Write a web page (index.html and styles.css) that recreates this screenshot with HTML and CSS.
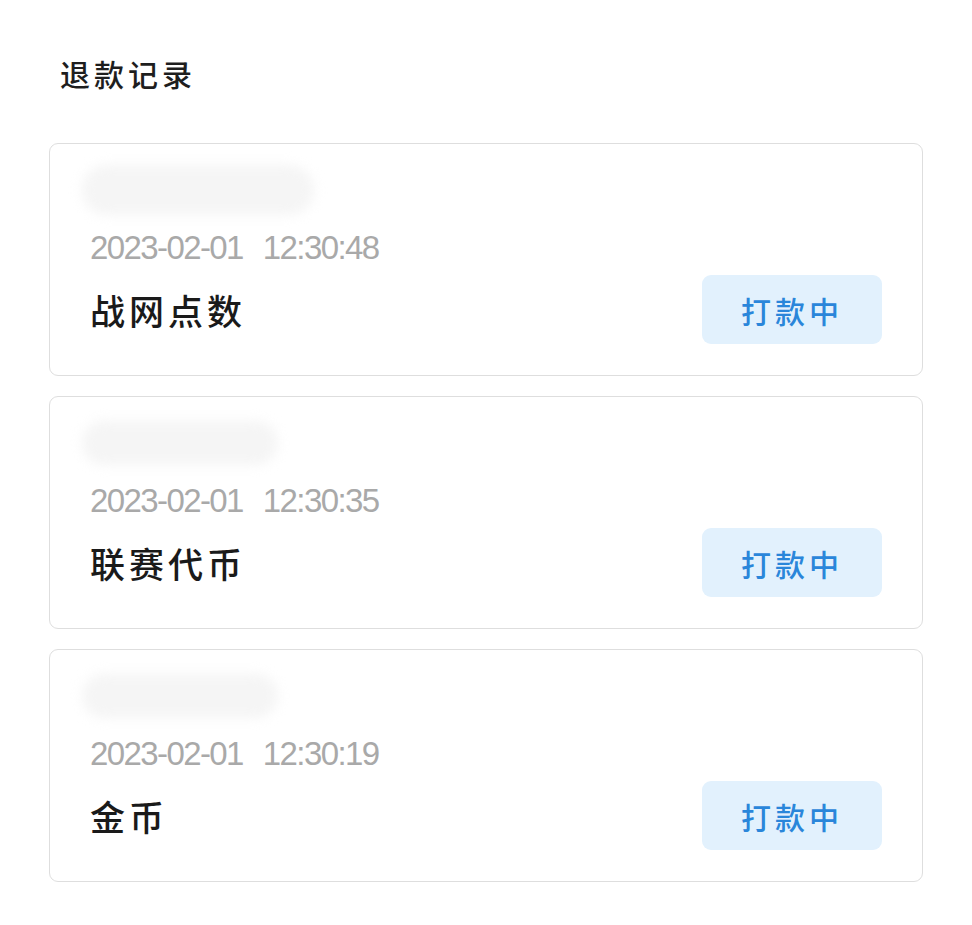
FILE: index.html
```html
<!DOCTYPE html>
<html lang="zh">
<head>
<meta charset="utf-8">
<link rel="stylesheet" href="styles.css">
</head>
<body>
<div class="page">
  <h1 class="page-title">退款记录</h1>
  <div class="list">
    <div class="card">
      <div class="blob-slot"><div class="blob blob-wide"></div></div>
      <div class="date">2023-02-01<span class="gap"></span>12:30:48</div>
      <div class="bottom">
        <div class="name">战网点数</div>
        <div class="status">打款中</div>
      </div>
    </div>
    <div class="card">
      <div class="blob-slot"><div class="blob"></div></div>
      <div class="date">2023-02-01<span class="gap"></span>12:30:35</div>
      <div class="bottom">
        <div class="name">联赛代币</div>
        <div class="status">打款中</div>
      </div>
    </div>
    <div class="card">
      <div class="blob-slot"><div class="blob"></div></div>
      <div class="date">2023-02-01<span class="gap"></span>12:30:19</div>
      <div class="bottom">
        <div class="name">金币</div>
        <div class="status">打款中</div>
      </div>
    </div>
  </div>
</div>
</body>
</html>
```
FILE: styles.css
```css
html, body {
  margin: 0;
  padding: 0;
  background: #ffffff;
}
.page {
  font-family: "Noto Sans CJK SC", "Noto Sans", sans-serif;
  padding: 0 49px;
}
.page-title {
  margin: 0;
  padding: 52px 0 0 11px;
  height: 42px;
  line-height: 42px;
  font-size: 30px;
  font-weight: 500;
  letter-spacing: 4px;
  color: #1e1e1e;
}
.list {
  margin-top: 49px;
  display: flex;
  flex-direction: column;
  gap: 20px;
}
.card {
  box-sizing: border-box;
  height: 233px;
  border: 1px solid #dedede;
  border-radius: 9px;
  padding: 20px 40px 0 40px;
  display: flex;
  flex-direction: column;
}
.blob-slot {
  height: 52px;
  display: flex;
  align-items: center;
}
.blob {
  margin-left: -8px;
  width: 196px;
  height: 44px;
  border-radius: 22px;
  background: #f5f5f5;
  filter: blur(6px);
}
.blob-wide {
  width: 232px;
  height: 50px;
  border-radius: 25px;
}
.date {
  margin-top: 12px;
  height: 40px;
  line-height: 40px;
  font-family: "Liberation Sans", sans-serif;
  font-size: 33px;
  color: #a9a9a9;
  letter-spacing: -1.6px;
  display: flex;
  align-items: center;
}
.gap {
  display: inline-block;
  width: 20px;
}
.bottom {
  margin-top: 7px;
  display: flex;
  justify-content: space-between;
  align-items: center;
}
.name {
  font-size: 35px;
  font-weight: 500;
  letter-spacing: 4px;
  color: #1a1a1a;
}
.status {
  width: 180px;
  height: 69px;
  border-radius: 9px;
  background: #e2f1fd;
  color: #2a86da;
  font-size: 30px;
  font-weight: 500;
  letter-spacing: 4px;
  display: flex;
  align-items: center;
  justify-content: center;
}
```
